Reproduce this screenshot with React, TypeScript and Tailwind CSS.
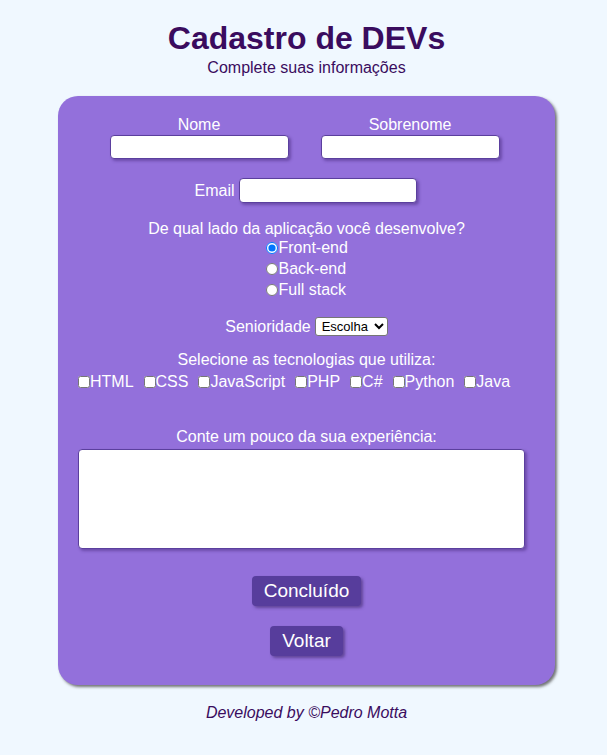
import React from "react";

export default function App() {
  const techs = ["HTML", "CSS", "JavaScript", "PHP", "C#", "Python", "Java"];
  const inputCls =
    "h-[24px] rounded-[4px] border border-[#5b3f9e] bg-white shadow-[2px_2px_3px_rgba(60,30,110,0.45)] outline-none";
  return (
    <div
      className="min-h-[755px] w-full bg-[#f0f8ff] flex flex-col items-center pl-[6px]"
      style={{ fontFamily: '"Liberation Sans", Arial, sans-serif' }}
    >
      <h1 className="mt-[20px] text-[32px] leading-[37px] font-bold text-[#3a0c5e]">
        Cadastro de DEVs
      </h1>
      <p className="mt-[2px] text-[16px] leading-[18px] text-[#3a0c5e]">Complete suas informações</p>

      <form className="mt-[19px] w-[497px] rounded-[20px] bg-[#9370db] shadow-[2px_2px_3px_rgba(70,70,70,0.75)] pt-[20px] pb-[29px] flex flex-col items-center text-white text-[16px] leading-[18px]">
        <div className="flex gap-[32px] mr-[4px]">
          <div className="flex flex-col items-center">
            <label className="mb-[1px]">Nome</label>
            <input className={`${inputCls} w-[179px]`} />
          </div>
          <div className="flex flex-col items-center">
            <label className="mb-[1px]">Sobrenome</label>
            <input className={`${inputCls} w-[179px]`} />
          </div>
        </div>

        <div className="mt-[19px] flex items-center gap-[4px] mr-[2px]">
          <label>Email</label>
          <input className={`${inputCls} w-[178px] h-[25px]`} />
        </div>

        <p className="mt-[17px]">De qual lado da aplicação você desenvolve?</p>
        <div className="-mt-[1px] flex flex-col items-center leading-[21px]">
          {["Front-end", "Back-end", "Full stack"].map((r, i) => (
            <label key={r} className="flex items-center w-[82px] whitespace-nowrap">
              <input
                type="radio"
                name="lado"
                defaultChecked={i === 0}
                className="m-0 mr-[1px] w-[12px] h-[12px] shrink-0"
              />
              <span>{r}</span>
            </label>
          ))}
        </div>

        <div className="mt-[17px] flex items-center gap-[4px]">
          <label>Senioridade</label>
          <select
            className="h-[19px] text-[13px] leading-[15px] text-black bg-white rounded-[3px] border border-[#767676] px-[2px]"
            style={{ fontFamily: '"Liberation Sans", Arial, sans-serif' }}
          >
            <option>Escolha</option>
          </select>
        </div>

        <p className="mt-[15px]">Selecione as tecnologias que utiliza:</p>
        <div className="mt-[4px] flex gap-[10px] self-start ml-[20px] whitespace-nowrap">
          {techs.map((t) => (
            <label key={t} className="flex items-center">
              <input type="checkbox" className="m-0 w-[12px] h-[12px] shrink-0" />
              <span>{t}</span>
            </label>
          ))}
        </div>

        <p className="mt-[37px]">Conte um pouco da sua experiência:</p>
        <textarea className="mt-[3px] self-start ml-[20px] w-[447px] h-[100px] rounded-[4px] border border-[#5b3f9e] bg-white shadow-[2px_2px_3px_rgba(60,30,110,0.45)] outline-none resize-none" />

        <button
          type="button"
          className="mt-[27px] h-[30px] px-[12px] rounded-[4px] bg-[#573d9c] text-white text-[19px] leading-[22px] shadow-[2px_2px_3px_rgba(50,30,90,0.5)]"
        >
          Concluído
        </button>
        <button
          type="button"
          className="mt-[20px] h-[30px] px-[12px] rounded-[4px] bg-[#573d9c] text-white text-[19px] leading-[22px] shadow-[2px_2px_3px_rgba(50,30,90,0.5)]"
        >
          Voltar
        </button>
      </form>

      <p className="mt-[19px] italic text-[16px] leading-[18px] text-[#3a0c5e]">
        Developed by ©Pedro Motta
      </p>
    </div>
  );
}
